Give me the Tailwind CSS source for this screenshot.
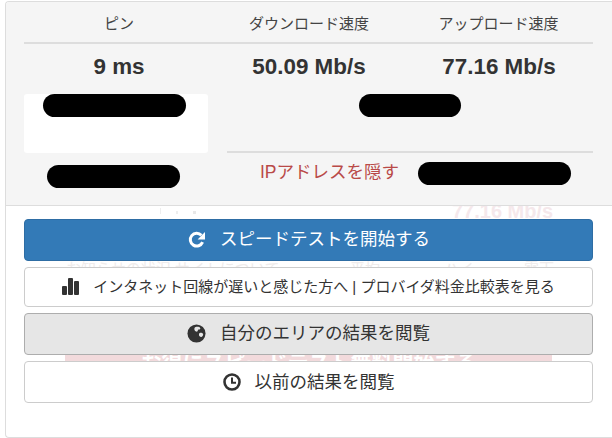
<!DOCTYPE html>
<html lang="ja">
<head>
<meta charset="utf-8">
<script src="https://cdn.jsdelivr.net/npm/@tailwindcss/browser@4"></script>
</head>
<body class="w-[612px] h-[438px] overflow-hidden bg-white font-['Liberation_Sans','Noto_Sans_CJK_JP',sans-serif] text-[#333]">
<div class="relative ml-[5px] mt-px w-[607px] h-[437px] border border-r-0 border-[#ddd] rounded-l-[4px] overflow-hidden bg-white">
  <!-- faint page content showing through behind the panel -->
  <div class="absolute left-[446px] top-[198px] text-[20px] leading-[22px] font-bold text-[#f5e8eb] whitespace-nowrap">77.16 Mb/s</div>
  <div class="absolute left-[154px] top-[206px] flex items-end gap-[15px]">
    <span class="w-px h-[6px] bg-[#eee]"></span><span class="w-[2px] h-[3px] bg-[#eee]"></span><span class="w-[3px] h-[3px] bg-[#e8e8e8]"></span>
  </div>
  <div class="absolute left-[60px] top-[259px] w-[500px] h-[6px] overflow-hidden flex text-[15px] leading-[15px] text-[#efecec] whitespace-nowrap">
    <span class="w-[284px]">お知らせの状況 サイトについて</span><span class="w-[94px]">平均</span><span class="w-[80px]">ハイ</span><span>露天</span>
  </div>
  <div class="absolute left-[59px] top-[353px] w-[487px] h-[7px] overflow-hidden bg-[#f2dadc] text-center text-[21px] leading-[16px] font-bold text-white whitespace-nowrap">お得にスピードテスト無料開始する</div>

  <section class="relative h-[204px] pt-px bg-[#f5f5f5] border-b border-[#ddd]">
    <div class="w-[569px] ml-[18px]">
      <div class="grid grid-cols-[190px_190px_189px] h-[41px] pt-[3px] items-center text-center text-[15px] border-b-2 border-[#ddd] text-[#444]">
        <div>ピン</div><div>ダウンロード速度</div><div>アップロード速度</div>
      </div>
      <div class="grid grid-cols-[190px_190px_190px] h-[50px] pt-[8px] items-start text-center text-[22.4px] leading-[30px] font-bold">
        <div>9 ms</div><div>50.09 Mb/s</div><div>77.16 Mb/s</div>
      </div>
      <div class="flex">
        <div class="w-[184px]">
          <div class="h-[59px] bg-white rounded-[3px] pl-[19px]">
            <div class="w-[143px] h-[23px] rounded-full bg-black"></div>
          </div>
          <div class="mt-[12px] ml-[23px] w-[133px] h-[23px] rounded-full bg-black"></div>
        </div>
        <div class="ml-[19px] w-[366px]">
          <div class="h-[59px] border-b-2 border-[#ddd] pl-[132px]">
            <div class="w-[102px] h-[23px] rounded-full bg-black"></div>
          </div>
          <div class="flex items-start h-[36px] pl-[33px] pt-[7px]">
            <span class="w-[158px] text-[17.5px] leading-[24px] text-[#b94a48] whitespace-nowrap">IPアドレスを隠す</span>
            <div class="mt-[2px] w-[153px] h-[23px] rounded-full bg-black"></div>
          </div>
        </div>
      </div>
    </div>
  </section>

  <section class="relative ml-[18px] w-[569px] pt-[13px] flex flex-col gap-[6px]">
    <button class="h-[42px] pb-px flex items-center justify-center gap-[13px] rounded-[4px] bg-[#337ab7] border border-[#2e6da4] text-white text-[17.5px]">
      <svg class="w-[20px] h-[20px]" viewBox="0 0 20 20" fill="none"><path d="M15.6 12.2A6.4 6.4 0 1 1 14.4 5.3" stroke="currentColor" stroke-width="3"/><path d="M18 2v7.4h-7.4z" fill="currentColor"/></svg>
      <span>スピードテストを開始する</span>
    </button>
    <button class="h-[40px] pt-px flex items-center justify-center gap-[14px] rounded-[4px] bg-white border border-[#ccc] text-[15px] text-[#333]">
      <svg class="w-[17px] h-[17px] -mt-[2px]" viewBox="0 0 17 17" fill="#333"><rect x="0" y="8" width="5" height="9" rx="1"/><rect x="6" y="0" width="5" height="17" rx="1"/><rect x="12" y="3" width="5" height="14" rx="1"/></svg>
      <span>インタネット回線が遅いと感じた方へ | プロバイダ料金比較表を見る</span>
    </button>
    <button class="h-[42px] pb-[2px] flex items-center justify-center gap-[14px] rounded-[4px] bg-[#e6e6e6] border border-[#adadad] text-[17.5px] text-[#333]">
      <svg class="w-[19px] h-[19px]" viewBox="0 0 20 20"><circle cx="10" cy="10" r="9.5" fill="#333"/><path d="M9 3.2c2-.6 4.5-.2 5 1.2.3 1-1 1.5-2 1.3-1 .6-.2 1.5-1.2 2.2-1 .5-2-.2-2.6-1C7.300 5.500 7.700 3.800 9 3.200zM13.500 9.500c1.500-.5 3.300.2 3.500 1.300.1 1.200-1 2.700-2 2.900-1.300.1-2.300-.8-2.400-2-.1-1 .1-1.800.9-2.200z" fill="#e6e6e6"/></svg>
      <span>自分のエリアの結果を閲覧</span>
    </button>
    <button class="h-[42px] flex items-center justify-center gap-[14px] rounded-[4px] bg-white border border-[#ccc] text-[17.5px] text-[#333]">
      <svg class="w-[18px] h-[18px]" viewBox="0 0 18 18" fill="none"><circle cx="9" cy="9" r="7.500" stroke="#333" stroke-width="2.600"/><path d="M9 4.500V9.800H13" stroke="#333" stroke-width="2"/></svg>
      <span>以前の結果を閲覧</span>
    </button>
  </section>
</div>
</body>
</html>
